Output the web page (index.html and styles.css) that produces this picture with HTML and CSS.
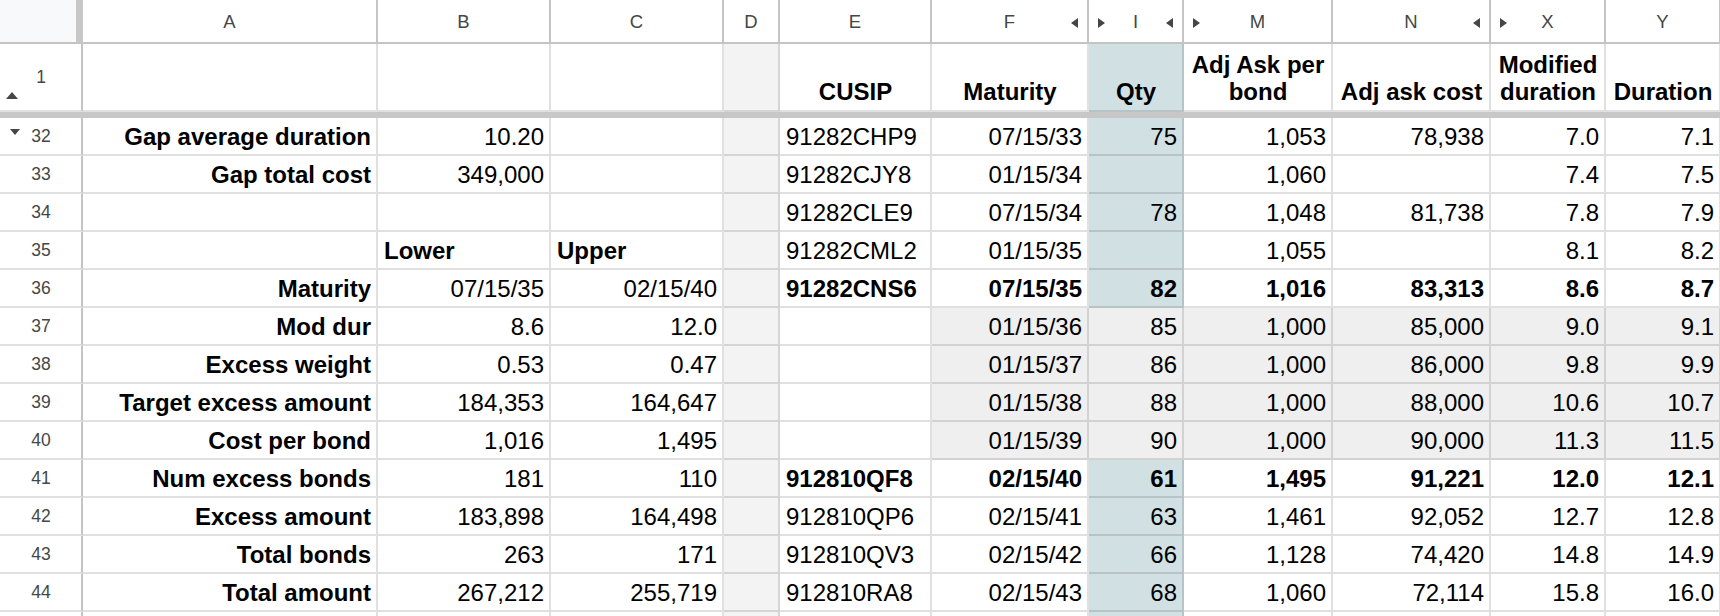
FILE: index.html
```html
<!DOCTYPE html>
<html>
<head>
<meta charset="utf-8">
<link rel="stylesheet" href="styles.css">
</head>
<body>
<div class="sheet">
  <div class="row hdr">
    <div class="corner"></div>
    <div class="ch">A</div>
    <div class="ch">B</div>
    <div class="ch">C</div>
    <div class="ch">D</div>
    <div class="ch">E</div>
    <div class="ch">F<svg class="arr ar-r" width="7" height="10" viewBox="0 0 7 10"><polygon points="7,0 7,10 0,5"/></svg></div>
    <div class="ch"><svg class="arr ar-l" width="7" height="10" viewBox="0 0 7 10"><polygon points="0,0 0,10 7,5"/></svg>I<svg class="arr ar-r" width="7" height="10" viewBox="0 0 7 10"><polygon points="7,0 7,10 0,5"/></svg></div>
    <div class="ch"><svg class="arr ar-l" width="7" height="10" viewBox="0 0 7 10"><polygon points="0,0 0,10 7,5"/></svg>M</div>
    <div class="ch">N<svg class="arr ar-r" width="7" height="10" viewBox="0 0 7 10"><polygon points="7,0 7,10 0,5"/></svg></div>
    <div class="ch"><svg class="arr ar-l" width="7" height="10" viewBox="0 0 7 10"><polygon points="0,0 0,10 7,5"/></svg>X</div>
    <div class="ch">Y</div>
  </div>

  <div class="row r1">
    <div class="rh">1<svg class="tog tog-up" width="12" height="7" viewBox="0 0 12 7"><polygon points="0,7 12,7 6,0"/></svg></div>
    <div class="c"></div>
    <div class="c"></div>
    <div class="c"></div>
    <div class="c d"></div>
    <div class="c hd">CUSIP</div>
    <div class="c hd">Maturity</div>
    <div class="c hd q">Qty</div>
    <div class="c hd">Adj Ask per<br>bond</div>
    <div class="c hd">Adj ask cost</div>
    <div class="c hd">Modified<br>duration</div>
    <div class="c hd">Duration</div>
  </div>

  <div class="freeze"></div>

  <div class="row">
    <div class="rh">32<svg class="tog tog-dn" width="10" height="6" viewBox="0 0 10 6"><polygon points="0,0 10,0 5,6"/></svg></div>
    <div class="c r b">Gap average duration</div>
    <div class="c r">10.20</div>
    <div class="c"></div>
    <div class="c d"></div>
    <div class="c">91282CHP9</div>
    <div class="c r">07/15/33</div>
    <div class="c r q">75</div>
    <div class="c r">1,053</div>
    <div class="c r">78,938</div>
    <div class="c r">7.0</div>
    <div class="c r">7.1</div>
  </div>

  <div class="row">
    <div class="rh">33</div>
    <div class="c r b">Gap total cost</div>
    <div class="c r">349,000</div>
    <div class="c"></div>
    <div class="c d"></div>
    <div class="c">91282CJY8</div>
    <div class="c r">01/15/34</div>
    <div class="c r q"></div>
    <div class="c r">1,060</div>
    <div class="c r"></div>
    <div class="c r">7.4</div>
    <div class="c r">7.5</div>
  </div>

  <div class="row">
    <div class="rh">34</div>
    <div class="c r b"></div>
    <div class="c r"></div>
    <div class="c"></div>
    <div class="c d"></div>
    <div class="c">91282CLE9</div>
    <div class="c r">07/15/34</div>
    <div class="c r q">78</div>
    <div class="c r">1,048</div>
    <div class="c r">81,738</div>
    <div class="c r">7.8</div>
    <div class="c r">7.9</div>
  </div>

  <div class="row">
    <div class="rh">35</div>
    <div class="c r b"></div>
    <div class="c b">Lower</div>
    <div class="c b">Upper</div>
    <div class="c d"></div>
    <div class="c">91282CML2</div>
    <div class="c r">01/15/35</div>
    <div class="c r q"></div>
    <div class="c r">1,055</div>
    <div class="c r"></div>
    <div class="c r">8.1</div>
    <div class="c r">8.2</div>
  </div>

  <div class="row">
    <div class="rh">36</div>
    <div class="c r b">Maturity</div>
    <div class="c r">07/15/35</div>
    <div class="c r">02/15/40</div>
    <div class="c d"></div>
    <div class="c b">91282CNS6</div>
    <div class="c r b">07/15/35</div>
    <div class="c r b q">82</div>
    <div class="c r b">1,016</div>
    <div class="c r b">83,313</div>
    <div class="c r b">8.6</div>
    <div class="c r b">8.7</div>
  </div>

  <div class="row">
    <div class="rh">37</div>
    <div class="c r b">Mod dur</div>
    <div class="c r">8.6</div>
    <div class="c r">12.0</div>
    <div class="c d"></div>
    <div class="c"></div>
    <div class="c r g">01/15/36</div>
    <div class="c r g">85</div>
    <div class="c r g">1,000</div>
    <div class="c r g">85,000</div>
    <div class="c r g">9.0</div>
    <div class="c r g">9.1</div>
  </div>

  <div class="row">
    <div class="rh">38</div>
    <div class="c r b">Excess weight</div>
    <div class="c r">0.53</div>
    <div class="c r">0.47</div>
    <div class="c d"></div>
    <div class="c"></div>
    <div class="c r g">01/15/37</div>
    <div class="c r g">86</div>
    <div class="c r g">1,000</div>
    <div class="c r g">86,000</div>
    <div class="c r g">9.8</div>
    <div class="c r g">9.9</div>
  </div>

  <div class="row">
    <div class="rh">39</div>
    <div class="c r b">Target excess amount</div>
    <div class="c r">184,353</div>
    <div class="c r">164,647</div>
    <div class="c d"></div>
    <div class="c"></div>
    <div class="c r g">01/15/38</div>
    <div class="c r g">88</div>
    <div class="c r g">1,000</div>
    <div class="c r g">88,000</div>
    <div class="c r g">10.6</div>
    <div class="c r g">10.7</div>
  </div>

  <div class="row">
    <div class="rh">40</div>
    <div class="c r b">Cost per bond</div>
    <div class="c r">1,016</div>
    <div class="c r">1,495</div>
    <div class="c d"></div>
    <div class="c"></div>
    <div class="c r g">01/15/39</div>
    <div class="c r g">90</div>
    <div class="c r g">1,000</div>
    <div class="c r g">90,000</div>
    <div class="c r g">11.3</div>
    <div class="c r g">11.5</div>
  </div>

  <div class="row">
    <div class="rh">41</div>
    <div class="c r b">Num excess bonds</div>
    <div class="c r">181</div>
    <div class="c r">110</div>
    <div class="c d"></div>
    <div class="c b">912810QF8</div>
    <div class="c r b">02/15/40</div>
    <div class="c r b q">61</div>
    <div class="c r b">1,495</div>
    <div class="c r b">91,221</div>
    <div class="c r b">12.0</div>
    <div class="c r b">12.1</div>
  </div>

  <div class="row">
    <div class="rh">42</div>
    <div class="c r b">Excess amount</div>
    <div class="c r">183,898</div>
    <div class="c r">164,498</div>
    <div class="c d"></div>
    <div class="c">912810QP6</div>
    <div class="c r">02/15/41</div>
    <div class="c r q">63</div>
    <div class="c r">1,461</div>
    <div class="c r">92,052</div>
    <div class="c r">12.7</div>
    <div class="c r">12.8</div>
  </div>

  <div class="row">
    <div class="rh">43</div>
    <div class="c r b">Total bonds</div>
    <div class="c r">263</div>
    <div class="c r">171</div>
    <div class="c d"></div>
    <div class="c">912810QV3</div>
    <div class="c r">02/15/42</div>
    <div class="c r q">66</div>
    <div class="c r">1,128</div>
    <div class="c r">74,420</div>
    <div class="c r">14.8</div>
    <div class="c r">14.9</div>
  </div>

  <div class="row">
    <div class="rh">44</div>
    <div class="c r b">Total amount</div>
    <div class="c r">267,212</div>
    <div class="c r">255,719</div>
    <div class="c d"></div>
    <div class="c">912810RA8</div>
    <div class="c r">02/15/43</div>
    <div class="c r q">68</div>
    <div class="c r">1,060</div>
    <div class="c r">72,114</div>
    <div class="c r">15.8</div>
    <div class="c r">16.0</div>
  </div>

  <div class="row">
    <div class="rh"></div>
    <div class="c"></div>
    <div class="c"></div>
    <div class="c"></div>
    <div class="c d"></div>
    <div class="c"></div>
    <div class="c"></div>
    <div class="c q"></div>
    <div class="c"></div>
    <div class="c"></div>
    <div class="c"></div>
    <div class="c"></div>
  </div>
</div>
</body>
</html>
```

FILE: styles.css
```css
html, body {
  margin: 0;
  padding: 0;
  background: #ffffff;
  overflow: hidden;
}

.sheet {
  width: 1720px;
  height: 616px;
  overflow: hidden;
  font-family: "Liberation Sans", Arial, sans-serif;
  color: #000000;
}

.row {
  display: grid;
  grid-template-columns: 83px 295px 173px 173px 56px 152px 157px 95px 149px 158px 115px 115px;
  height: 38px;
}

.row > div {
  box-sizing: border-box;
}

/* column header row */
.hdr {
  height: 44px;
}

.corner {
  background: #f8f9fa;
  border-right: 7px solid #c7c7c7;
  border-bottom: 2px solid #c4c4c4;
}

.ch {
  position: relative;
  display: flex;
  align-items: center;
  justify-content: center;
  font-size: 18.5px;
  color: #444746;
  border-right: 2px solid #c4c4c4;
  border-bottom: 2px solid #c4c4c4;
  padding-top: 1px;
}

.arr {
  position: absolute;
  top: 18px;
  fill: #444746;
}

.ar-r {
  right: 9px;
}

.ar-l {
  left: 9px;
}

/* row headers */
.rh {
  position: relative;
  display: flex;
  align-items: center;
  justify-content: center;
  font-size: 17.5px;
  color: #444746;
  border-right: 2px solid #c4c4c4;
  border-bottom: 2px solid #e1e1e1;
  padding-left: 1px;
}

.tog {
  position: absolute;
  fill: #444746;
}

.tog-up {
  left: 6px;
  bottom: 11px;
}

.tog-dn {
  left: 10px;
  top: 11px;
}

.freeze {
  height: 6px;
  background: #c7c7c7;
}

/* cells */
.c {
  display: flex;
  align-items: center;
  justify-content: flex-start;
  font-size: 24px;
  line-height: 27px;
  white-space: nowrap;
  padding: 0 5px 0 6px;
  border-right: 2px solid rgba(0, 0, 0, 0.12);
  border-bottom: 2px solid rgba(0, 0, 0, 0.12);
}

.c.r {
  justify-content: flex-end;
}

.c.b {
  font-weight: bold;
}

.c.d {
  background: #f3f3f3;
}

.c.q {
  background: #d0e0e3;
}

.c.g {
  background: #efefef;
}

/* row 1 */
.r1 {
  height: 68px;
}

.r1 .c {
  align-items: flex-end;
  padding-bottom: 5px;
}

.r1 .c.hd {
  font-weight: bold;
  justify-content: center;
  text-align: center;
}
```
